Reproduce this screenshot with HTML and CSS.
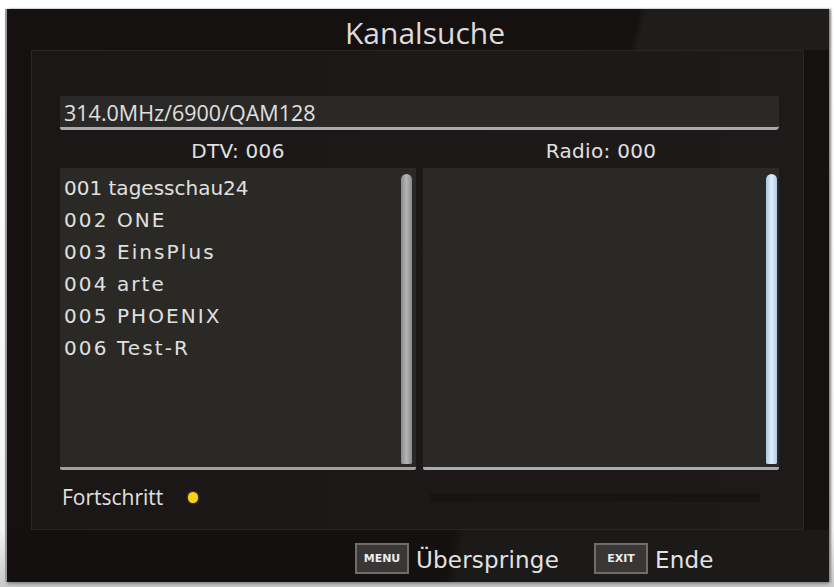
FILE: index.html
```html
<!DOCTYPE html>
<html>
<head>
<meta charset="utf-8">
<link rel="stylesheet" href="styles.css">
</head>
<body>
<div class="screen">
  <div class="glare-top"></div>
  <div class="title">Kanalsuche</div>
  <div class="panel">
    <div class="freq">314.0MHz/6900/QAM128</div>
    <div class="labels">
      <div class="label">DTV: 006</div>
      <div class="label">Radio: 000</div>
    </div>
    <div class="lists">
      <div class="box">
        <ul class="items">
          <li class="first">001 tagesschau24</li>
          <li>002 ONE</li>
          <li>003 EinsPlus</li>
          <li>004 arte</li>
          <li>005 PHOENIX</li>
          <li>006 Test-R</li>
        </ul>
        <div class="scroll"></div>
      </div>
      <div class="box box-right">
        <div class="items"></div>
        <div class="scroll scroll-blue"></div>
      </div>
    </div>
    <div class="progress">
      <span class="prog-label">Fortschritt</span>
      <span class="dot"></span>
      <span class="track"></span>
    </div>
  </div>
  <div class="footer">
    <span class="key">MENU</span><span class="action">Überspringe</span>
    <span class="key key-exit">EXIT</span><span class="action">Ende</span>
  </div>
</div>
</body>
</html>
```
FILE: styles.css
```css
html, body {
  margin: 0;
  padding: 0;
}
body {
  width: 834px;
  height: 587px;
  background: linear-gradient(to bottom, #ffffff 0%, #f4f4f4 90%, #c8c8c8 100%);
  overflow: hidden;
  font-family: "DejaVu Sans", sans-serif;
  color: #e2e2e2;
}
.screen {
  position: relative;
  margin: 9px 0 0 7px;
  width: 822px;
  height: 573px;
  background: #151111;
  display: flex;
  flex-direction: column;
  box-shadow: -2px 0 0 #9a9a9a, 2px 0 2px #8a8a8a, 0 2px 3px #888;
  overflow: hidden;
}
.glare-top {
  position: absolute;
  left: 560px;
  top: 0;
  width: 300px;
  height: 41px;
  background: linear-gradient(105deg, rgba(33,30,30,0) 0px, rgba(33,30,30,0) 70px, #1f1c1c 78px, #1f1c1c 100%);
}
.title {
  position: relative;
  box-sizing: border-box;
  height: 41px;
  padding-top: 9px;
  padding-left: 14px;
  text-align: center;
  font-family: "Open Sans", sans-serif;
  font-size: 30px;
  line-height: 30px;
  color: #dcdcdc;
}
.panel {
  position: relative;
  margin: 0 25px 0 24px;
  height: 480px;
  box-sizing: border-box;
  border: 1px solid #2b2625;
  background: linear-gradient(to right, #1b1716, #1e1a19);
  padding: 45px 24px 0 28px;
  display: flex;
  flex-direction: column;
}
.freq {
  height: 31px;
  background: #2b2927;
  border-bottom: 3px solid #a7aaad;
  border-radius: 2px 2px 4px 2px;
  font-family: "Open Sans", sans-serif;
  font-size: 21.5px;
  line-height: 34px;
  padding-left: 4px;
  color: #e0e0e0;
}
.labels {
  height: 38px;
  display: flex;
  gap: 7px;
}
.label {
  flex: 1;
  text-align: center;
  font-size: 20px;
  line-height: 42px;
  letter-spacing: 0.3px;
  color: #e0e0e0;
}
.lists {
  display: flex;
  gap: 7px;
  height: 302px;
}
.box {
  flex: 1;
  position: relative;
  background: #2a2926;
  border-bottom: 3px solid #9fa2a4;
  border-radius: 0 0 2px 2px;
}
.box-right {
  border-bottom-color: #a7adb4;
}
.items {
  list-style: none;
  margin: 0;
  padding: 4px 0 0 4px;
}
.items li {
  height: 32px;
  line-height: 32px;
  font-size: 20px;
  letter-spacing: 2.1px;
  color: #e0e0e0;
}
.items li.first {
  letter-spacing: 0;
}
.scroll {
  position: absolute;
  right: 4px;
  top: 6px;
  bottom: 3px;
  width: 11px;
  border-radius: 6px 6px 2px 2px;
  background: linear-gradient(to right, #8c8c8c, #b4b4b4 50%, #8a8a8a);
}
.scroll-blue {
  background: linear-gradient(to right, #a9c6e2, #dfeefb 50%, #b0cbe6);
  right: 2px;
}
.progress {
  height: 54px;
  display: flex;
  align-items: center;
  padding-left: 2px;
}
.prog-label {
  font-family: "Open Sans", sans-serif;
  font-size: 21px;
  color: #e0e0e0;
  width: 126px;
}
.dot {
  width: 10px;
  height: 11px;
  border-radius: 50%;
  background: #f2d31a;
  box-shadow: 0 0 2px #c9a800;
}
.track {
  margin-left: 232px;
  width: 330px;
  height: 9px;
  background: #181413;
}
.footer {
  flex: 1;
  display: flex;
  align-items: center;
  padding-left: 348px;
  padding-top: 4px;
  background: linear-gradient(100deg, #141010 0px, #141010 440px, #1c1919 452px, #1c1919 100%);
}
.key {
  box-sizing: border-box;
  width: 54px;
  height: 31px;
  border: 2px solid #6f6d6b;
  background: #393735;
  color: #ececec;
  font-size: 11px;
  font-weight: bold;
  line-height: 27px;
  text-align: center;
}
.key-exit {
  margin-left: 35px;
}
.action {
  font-size: 23px;
  letter-spacing: 0.2px;
  color: #e2e2e2;
  margin-left: 7px;
  margin-top: 4px;
}
```
